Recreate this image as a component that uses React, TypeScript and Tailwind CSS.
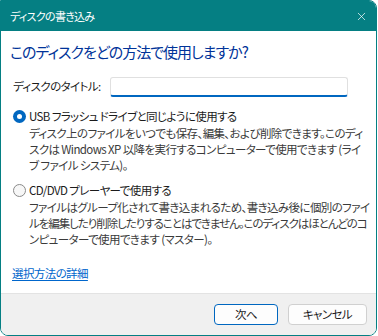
import { X } from "lucide-react";

const font = "[font-family:'Noto_Sans_CJK_JP','Noto_Sans',sans-serif] [font-feature-settings:'palt']";
const small = "text-[11.5px] tracking-[-0.6px] whitespace-nowrap";

function Radio({ checked }: { checked: boolean }) {
  if (checked) {
    return (
      <span className="flex h-[13px] w-[13px] shrink-0 items-center justify-center rounded-full bg-[#0067c0]">
        <span className="h-[5px] w-[5px] rounded-full bg-white" />
      </span>
    );
  }
  return <span className="h-[13px] w-[13px] shrink-0 rounded-full border border-[#8a8a8a] bg-[#f7f7f7]" />;
}

function Option({
  checked,
  label,
  lines
}: {
  checked: boolean;
  label: string;
  lines: { text: string; tight?: boolean }[];
}) {
  return (
    <div className="flex flex-col">
      <div className="flex h-4 items-center gap-[3px] pl-[12px]">
        <Radio checked={checked} />
        <span className={`${small} leading-4 text-[#1b1b1b]`}>{label}</span>
      </div>
      <div className={`mt-[1px] pl-[28px] leading-4 text-[#3a3a3a] ${small}`}>
        {lines.map((line) => (
          <p key={line.text} className={line.tight ? "tracking-[-1.05px]" : ""}>
            {line.text}
          </p>
        ))}
      </div>
    </div>
  );
}

export default function App() {
  return (
    <div className={`h-[336px] w-[378px] bg-white ${font}`}>
      <div className="flex h-[336px] w-[377px] flex-col overflow-hidden rounded-tr-[8px] rounded-b-[8px] border border-[#057f83] bg-white">
        <div className="flex h-[30px] shrink-0 items-center justify-between bg-[#057f83] pl-[9px] pr-[8px]">
          <span className="whitespace-nowrap text-[11px] tracking-[-0.7px] text-white">ディスクの書き込み</span>
          <X className="h-[13px] w-[13px] text-white" strokeWidth={1.3} aria-hidden="true" />
        </div>

        <div className="flex flex-1 flex-col">
          <h1 className="mt-[10px] whitespace-nowrap pl-[9px] text-[15px] leading-[22px] tracking-[-1px] text-[#003399]">
            このディスクをどの方法で使用しますか?
          </h1>

          <div className="mt-[14px] flex h-[20px] items-center">
            <span className={`w-[109px] shrink-0 pl-[12px] text-[#1b1b1b] ${small}`}>ディスクのタイトル:</span>
            <div className="h-[20px] w-[238px] rounded-[3px] border border-b-2 border-[#e0e0e0] border-b-[#0067c0] bg-white" />
          </div>

          <div className="mt-[11px]">
            <Option
              checked
              label="USB フラッシュ ドライブと同じように使用する"
              lines={[
                { text: "ディスク上のファイルをいつでも保存、編集、および削除できます。このディ" },
                { text: "スクは Windows XP 以降を実行するコンピューターで使用できます (ライ" },
                { text: "ブ ファイル システム)。" }
              ]}
            />
          </div>

          <div className="mt-[9px]">
            <Option
              checked={false}
              label="CD/DVD プレーヤーで使用する"
              lines={[
                { text: "ファイルはグループ化されて書き込まれるため、書き込み後に個別のファイ" },
                { text: "ルを編集したり削除したりすることはできません。このディスクはほとんどのコ", tight: true },
                { text: "ンピューターで使用できます (マスター)。" }
              ]}
            />
          </div>

          <a className={`mt-[18px] self-start pl-[11px] leading-4 text-[#0066cc] underline underline-offset-2 ${small}`}>
            選択方法の詳細
          </a>
        </div>

        <div className="flex h-[42px] shrink-0 items-center justify-end gap-[10px] border-t border-[#e3e3e3] bg-[#f0f0f0] pr-[9px]">
          <button className={`h-[21px] w-[64px] rounded-[4px] border border-[#0067c0] bg-[#fdfdfd] leading-none text-[#1b1b1b] ${small}`}>
            次へ
          </button>
          <button className={`h-[21px] w-[79px] rounded-[4px] border border-[#d0d0d0] bg-[#fdfdfd] leading-none text-[#1b1b1b] ${small}`}>
            キャンセル
          </button>
        </div>
      </div>
    </div>
  );
}
